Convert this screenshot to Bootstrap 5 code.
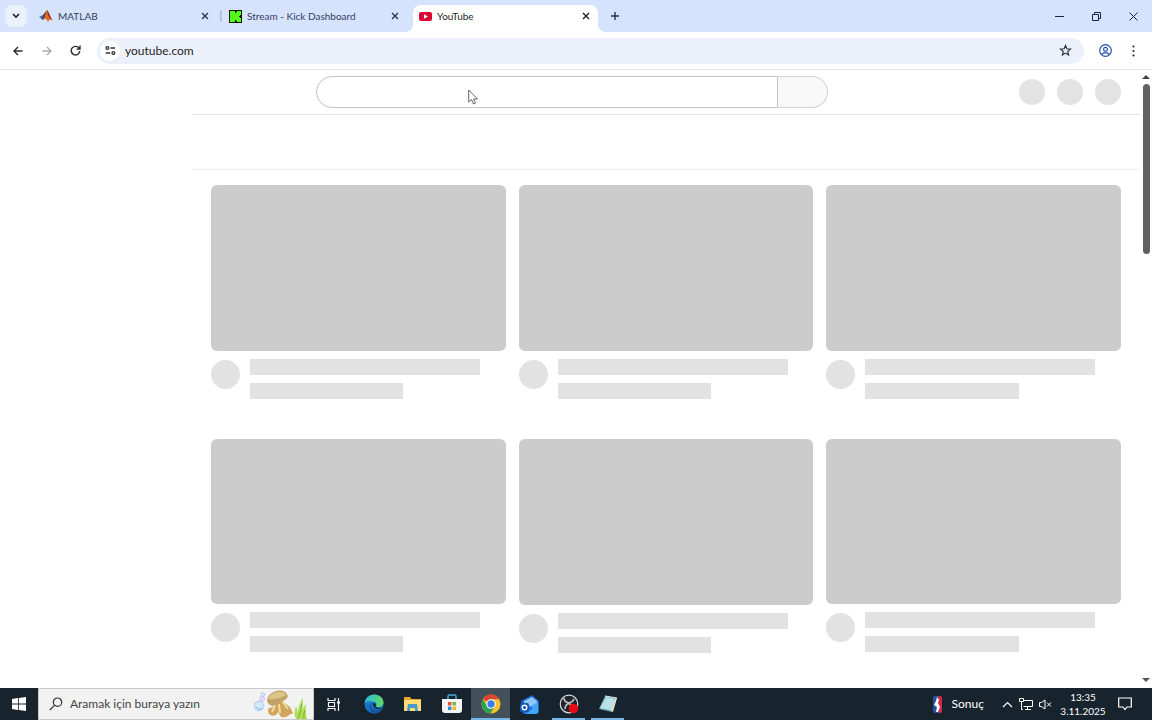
<!DOCTYPE html>
<html lang="tr">
<head>
<meta charset="utf-8">
<meta name="viewport" content="width=device-width, initial-scale=1">
<title>YouTube</title>
<link href="https://cdn.jsdelivr.net/npm/bootstrap@5.3.0/dist/css/bootstrap.min.css" rel="stylesheet">
<style>
body{font-family:Lato,"Open Sans",sans-serif;font-size:10px;line-height:16px;color:#1f1f1f;background:#fff}
button,input{font:inherit;color:inherit}
button{border:0;background:none;padding:0;display:flex;align-items:center;justify-content:center;flex-shrink:0}
svg{display:block;flex-shrink:0}
/* tab strip */
.tabstrip{height:32px;background:#d5e3fd}
.tab-menu{width:22px;height:22px;border-radius:7px;background:#e9f1fe;margin:0 10px 0 5px}
.tab-item{width:185px;height:27px;padding:0 8px 0 7px;gap:5px;color:#33415f;position:relative}
.tab-item a{color:inherit;text-decoration:none}
.tab-first{width:180px;padding-left:2px}
.tab-divided{border-left:2px solid #b3c4e6;height:12px;margin-left:3px}
.tab-active{margin-left:6px;background:#fff;border-radius:8px 8px 0 0;color:#1f1f1f;padding:0 8px 5px 6px}
.tab-active::before,.tab-active::after{content:"";position:absolute;bottom:0;width:8px;height:8px}
.tab-active::before{left:-8px;background:radial-gradient(circle at 0 0,transparent 8px,#fff 8px)}
.tab-active::after{right:-8px;background:radial-gradient(circle at 100% 0,transparent 8px,#fff 8px)}
.win-btn{width:37px;height:32px}
/* address row */
.toolbar{height:38px;border-bottom:1px solid #e3e4e8;padding:0 8px 0 7px;background:#fff}
.nav-btn{width:21px;height:22px}
.profile-btn{width:26px;margin:0 5px 0 8px}
.omnibox{height:26px;border-radius:13px;background:#ecf0fa;padding:0 12px 0 3px;margin-left:3px;gap:5px}
.site-info{width:20px;height:20px;border-radius:50%;background:#fff}
.omnibox input{border:0;background:none;outline:0;font-size:12px;padding:0}
/* page */
.viewport-row{min-height:0}
.page-main{margin-left:192px}
.masthead{height:45px;border-bottom:1px solid #e4e4e4;padding:0 19px 0 124px}
.search-form{width:512px;height:32px}
.search-form input{border:1px solid #c4c4c4;border-radius:16px 0 0 16px;padding:0 14px;outline:0}
.search-form button{width:50px;border:1px solid #d3d3d3;border-left:0;border-radius:0 16px 16px 0;background:#f8f8f8}
.dots{gap:12px}
.dot{width:26px;height:26px;border-radius:50%;background:#e3e3e3}
.chips{height:55px;border-bottom:1px solid #efefef}
.video-grid{display:grid;grid-template-columns:repeat(3,1fr);column-gap:13px;row-gap:40px;padding:15px 19px 0}
.thumb{aspect-ratio:16/9;border-radius:6px;background:#ccc}
.avatar{width:29px;height:29px;border-radius:50%;background:#e2e2e2;margin-top:1px}
.line{height:16px;width:90%;background:#e2e2e2}
.line-short{width:60%}
.meta{padding-top:8px;gap:10px}
.scroll-track{width:12px;padding:5px 0}
.scroll-thumb{width:7px;height:170px;border-radius:4px;background:#616161;margin-top:4px}
.cursor{position:absolute;left:468px;top:89px;pointer-events:none}
/* taskbar */
.taskbar{height:32px;background:#17232d;color:#fff}
.start{width:38px;height:32px}
.task-search{width:276px;height:32px;background:#f2f2f2;border:1px solid #c9c9c9;color:#333;padding:0 5px 0 10px;gap:7px}
.task-search input{border:0;background:none;outline:0;font-size:12px;padding:0;min-width:0}
.task-search input::placeholder{color:#444;opacity:1}
.task-btn{width:39px;height:32px;position:relative}
.task-view{width:40px}
.task-current{background:#44505a}
.task-open::after,.task-current::after{content:"";position:absolute;bottom:0;left:3px;right:3px;height:2px;background:#76b5e8}
.task-current::after{left:0;right:0}
.tray-news{font-size:12px;gap:10px;margin-right:18px}
.tray-icons{gap:6px;margin-right:7px}
.clock{width:48px;line-height:14px;text-align:center}
.notice{width:36px;height:32px}
.peek{width:9px;height:32px}
</style>
</head>
<body>
<div class="d-flex flex-column vh-100 overflow-hidden position-relative">
  <header class="tabstrip d-flex align-items-center flex-shrink-0">
    <button class="tab-menu" aria-label="Sekme ara"><svg width="8" height="6" viewBox="0 0 8 6" fill="none" stroke="#1b1e28" stroke-width="1.6"><path d="M1 1l3 3 3-3"/></svg></button>
    <div class="tab-item tab-first d-flex align-items-center">
      <svg width="14" height="12" viewBox="0 0 14 12"><path d="M0 7l4-2 2 2-2 3z" fill="#317fb1"/><path d="M4 5l4-5-2 7-2 3-1-1z" fill="#6b3a48"/><path d="M8 0c2 2 3 7 6 11-2-2-3-2-5 1C8 9 6 8 5 9c2-3 2-7 3-9z" fill="#e16c22"/><path d="M8 0c2 2 3 7 6 11-3-3-5-3-6-11z" fill="#982b1c"/></svg>
      <a href="#" class="flex-grow-1 text-truncate">MATLAB</a>
      <button aria-label="Kapat"><svg width="8" height="8" viewBox="0 0 8 8" stroke="#27324a" stroke-width="1.3"><path d="M1 1l6 6M7 1L1 7"/></svg></button>
    </div>
    <div class="tab-divided"></div>
    <div class="tab-item d-flex align-items-center">
      <svg width="13" height="13" viewBox="0 0 13 13"><path fill="#0b160b" d="M0 0h13v13H0z"/><path fill="#53fc18" d="M1 1h5v2h1V2h1V1h4v4h-1v1h-1v1h1v1h1v4H8v-1H7v-1H6v2H1z"/></svg>
      <a href="#" class="flex-grow-1 text-truncate">Stream - Kick Dashboard</a>
      <button aria-label="Kapat"><svg width="8" height="8" viewBox="0 0 8 8" stroke="#27324a" stroke-width="1.3"><path d="M1 1l6 6M7 1L1 7"/></svg></button>
    </div>
    <div class="tab-item tab-active d-flex align-items-center align-self-end">
      <svg width="13" height="9" viewBox="0 0 13 9"><rect width="13" height="9" rx="2" fill="#dc0834"/><path fill="#fff" d="M5 2.3v4.4L9 4.5z"/></svg>
      <a href="#" class="flex-grow-1 text-truncate">YouTube</a>
      <button aria-label="Kapat"><svg width="8" height="8" viewBox="0 0 8 8" stroke="#1f1f1f" stroke-width="1.4"><path d="M1 1l6 6M7 1L1 7"/></svg></button>
    </div>
    <button class="ms-2 px-1" aria-label="Yeni sekme"><svg width="10" height="10" viewBox="0 0 10 10" stroke="#26304a" stroke-width="1.4"><path d="M5 1v8M1 5h8"/></svg></button>
    <div class="ms-auto d-flex">
      <button class="win-btn" aria-label="Küçült"><svg width="9" height="9" viewBox="0 0 9 9" stroke="#1e2740"><path d="M0 4.5h9"/></svg></button>
      <button class="win-btn" aria-label="Geri yükle"><svg width="9" height="9" viewBox="0 0 9 9" fill="none" stroke="#1e2740"><path d="M.5 2.5h6v6h-6zM2.500 2V.5h6v6H7"/></svg></button>
      <button class="win-btn" aria-label="Kapat"><svg width="9" height="9" viewBox="0 0 9 9" stroke="#1e2740"><path d="M.5.5l8 8M8.500.5l-8 8"/></svg></button>
    </div>
  </header>

  <nav class="toolbar d-flex align-items-center flex-shrink-0" aria-label="Adres">
    <button class="nav-btn me-2" aria-label="Geri"><svg width="10" height="10" viewBox="0 0 10 10" fill="none" stroke="#2b2b2b" stroke-width="1.4"><path d="M9.5 5H1M5 1L1 5l4 4"/></svg></button>
    <button class="nav-btn me-2" aria-label="İleri"><svg width="10" height="10" viewBox="0 0 10 10" fill="none" stroke="#aaa" stroke-width="1.3"><path d="M.5 5H9M5 1l4 4-4 4"/></svg></button>
    <button class="nav-btn me-2" aria-label="Yenile"><svg width="11" height="11" viewBox="0 0 11 11" fill="none" stroke="#2b2b2b" stroke-width="1.4"><path d="M9.3 3.6A4.3 4.3 0 1 0 9.8 6M10 .6v3.5H6.5"/></svg></button>
    <div class="omnibox d-flex align-items-center flex-grow-1">
      <button class="site-info" aria-label="Site bilgileri"><svg width="11" height="9" viewBox="0 0 11 9" fill="none" stroke="#333" stroke-width="1.3"><circle cx="2.4" cy="2" r="1.4"/><path d="M5.5 2h4.5M.8 7h4.4"/><circle cx="8.4" cy="7" r="1.4"/></svg></button>
      <input class="flex-grow-1" type="text" value="youtube.com" aria-label="Adres çubuğu">
      <button aria-label="Yer işareti"><svg width="13" height="13" viewBox="0 0 13 13" fill="none" stroke="#303440" stroke-width="1.2"><path d="M6.5 1.500l1.400 3.300 3.600.3-2.700 2.400.8 3.500-3.100-1.900L3.400 11l.8-3.500-2.700-2.400 3.600-.3z"/></svg></button>
    </div>
    <button class="nav-btn profile-btn" aria-label="Profil"><svg width="13" height="13" viewBox="0 0 13 13" fill="none" stroke="#2450a8" stroke-width="1.2"><circle cx="6.5" cy="6.5" r="5.8"/><circle cx="6.5" cy="5.3" r="1.9"/><path d="M2.6 10.5c2-2.4 5.8-2.4 7.8 0"/></svg></button>
    <button class="nav-btn" aria-label="Menü"><svg width="3" height="12" viewBox="0 0 3 12" fill="#2b2b2b"><circle cx="1.5" cy="1.5" r="1.1"/><circle cx="1.5" cy="6" r="1.1"/><circle cx="1.5" cy="10.5" r="1.1"/></svg></button>
  </nav>

  <div class="viewport-row d-flex flex-grow-1 overflow-hidden">
    <main class="page-main flex-grow-1">
      <div class="masthead d-flex align-items-center">
        <form class="search-form d-flex"><input class="flex-grow-1" type="text" aria-label="Ara"><button type="button" aria-label="Ara"></button></form>
        <div class="dots d-flex ms-auto"><div class="dot"></div><div class="dot"></div><div class="dot"></div></div>
      </div>
      <div class="chips"></div>
      <div class="video-grid">
        <article><div class="thumb"></div><div class="d-flex meta"><div class="avatar"></div><div class="flex-grow-1"><div class="line mb-2"></div><div class="line line-short"></div></div></div></article>
        <article><div class="thumb"></div><div class="d-flex meta"><div class="avatar"></div><div class="flex-grow-1"><div class="line mb-2"></div><div class="line line-short"></div></div></div></article>
        <article><div class="thumb"></div><div class="d-flex meta"><div class="avatar"></div><div class="flex-grow-1"><div class="line mb-2"></div><div class="line line-short"></div></div></div></article>
        <article><div class="thumb"></div><div class="d-flex meta"><div class="avatar"></div><div class="flex-grow-1"><div class="line mb-2"></div><div class="line line-short"></div></div></div></article>
        <article><div class="thumb"></div><div class="d-flex meta"><div class="avatar"></div><div class="flex-grow-1"><div class="line mb-2"></div><div class="line line-short"></div></div></div></article>
        <article><div class="thumb"></div><div class="d-flex meta"><div class="avatar"></div><div class="flex-grow-1"><div class="line mb-2"></div><div class="line line-short"></div></div></div></article>
      </div>
    </main>
    <div class="scroll-track d-flex flex-column align-items-center flex-shrink-0">
      <svg width="8" height="5" viewBox="0 0 8 5"><path d="M4 0l4 4H0z" fill="#444"/></svg>
      <div class="scroll-thumb"></div>
      <svg class="mt-auto" width="8" height="5" viewBox="0 0 8 5"><path d="M0 0h8L4 4z" fill="#555"/></svg>
    </div>
  </div>

  <footer class="taskbar d-flex align-items-center flex-shrink-0">
    <button class="start" aria-label="Başlat"><svg width="14" height="14" viewBox="0 0 14 14" fill="#fff"><path d="M0 2l6-.9v5.500H0zM6.800 1L14 0v6.600H6.800zM0 7.400h6v5.500L0 12zM6.800 7.400H14V14l-7.200-1z"/></svg></button>
    <label class="task-search d-flex align-items-center">
      <svg width="14" height="14" viewBox="0 0 14 14" fill="none" stroke="#333" stroke-width="1.200"><circle cx="8.500" cy="5.200" r="4.200"/><path d="M5.500 8.300L.8 13"/></svg>
      <input class="flex-grow-1" type="text" placeholder="Aramak için buraya yazın" aria-label="Aramak için buraya yazın">
      <svg class="align-self-end" width="54" height="30" viewBox="0 0 54 30"><circle cx="8" cy="10" r="2.500" fill="#e6ddfa" stroke="#b9b5e6" stroke-width=".7"/><circle cx="9" cy="5.500" r="1.800" fill="#dce7fc" stroke="#b9b5e6" stroke-width=".7"/><circle cx="5" cy="17" r="4.800" fill="#d2e9fb" stroke="#a5bfe3" stroke-width=".8"/><path d="M2 18q3 4 6 1" stroke="#7bb4e0" fill="none"/><path d="M22 15q-4 4-7 4-2 2 0 6 3 3 7 1l2-3 3 5q6 1 8-2l4-2-3-6-8-6z" fill="#d0a55c"/><path d="M13 12q0-7 9-10 9-2 12 5-1 4-8 6l-4 4q-7 1-9-5z" fill="#c1a365"/><path d="M14 10q2-5 9-7 7-1 9 3-8 5-18 4z" fill="#dbc589"/><path d="M21 16l-3 7M25 15l1 9M29 13l5 7" stroke="#f0dca3" stroke-width="2"/><path d="M42 30q-3-6 0-13 2 5 2 8 0-9 5-16 0 9-1 14 1-5 4-8-1 9 1 15z" fill="#b0df55"/><path d="M44 30q3-8 4-15m2 15q-1-5 1-9" stroke="#72b936" fill="none"/></svg>
    </label>
    <button class="task-btn task-view" aria-label="Görev görünümü"><svg width="14" height="13" viewBox="0 0 14 13" fill="none" stroke="#f4f6f8" stroke-width="1.200"><path d="M1 0v2.500h7V0M1.500 4.500h6v4h-6zM1 13v-2.500h7V13M11.500 0v13"/><path d="M10 4.500h3" stroke-width="2"/></svg></button>
    <button class="task-btn" aria-label="Edge"><svg width="20" height="20" viewBox="0 0 20 20"><defs><linearGradient id="e1"><stop stop-color="#26b9dc"/><stop offset="1" stop-color="#62dc62"/></linearGradient><linearGradient id="e2" x2="0" y2="1"><stop stop-color="#2086cd"/><stop offset="1" stop-color="#1368bd"/></linearGradient></defs><circle cx="10" cy="10" r="9.500" fill="url(#e2)"/><path d="M.5 10A9.500 9.500 0 0 1 10 .5c6 0 9.500 4 9.500 8 0 4-5 6-8 4 2-2 1-5-3-5C4 6.500 1 8 .5 10z" fill="url(#e1)"/><path d="M8 8.500c-2 2-1 7 4 7.500 3 0 5-1 6.500-2-2 4-5 5.500-8.500 5.500C6 18 4 11 8 8.500z" fill="#1655a4"/><path d="M9 9q4 0 2.500 3.500 3 2.500 7 .8-1 1.700-4 1.700-6-.5-5.500-6z" fill="#17232d"/></svg></button>
    <button class="task-btn" aria-label="Dosya Gezgini"><svg width="17" height="15" viewBox="0 0 17 15"><path d="M0 0h6l1.500 2H17v4H0z" fill="#e8a72d"/><path d="M0 3h17v11H0z" fill="#ffdc76"/><path d="M4 7h9l1 7h-3v-3H6v3H3z" fill="#4999cf"/></svg></button>
    <button class="task-btn" aria-label="Store"><svg width="20" height="20" viewBox="0 0 20 20"><path d="M6 6V2q0-1 1-1h6q1 0 1 1v4" fill="none" stroke="#49a6d9" stroke-width="1.500"/><path d="M0 5h20v11q0 3-3 3H3q-3 0-3-3z" fill="#f1f3f5"/><path fill="#e45637" d="M6 8h3.500v3.500H6z"/><path fill="#80b73c" d="M10.500 8H14v3.500h-3.500z"/><path fill="#318ed0" d="M6 12.500h3.500V16H6z"/><path fill="#efb82e" d="M10.500 12.500H14V16h-3.500z"/></svg></button>
    <button class="task-btn task-current" aria-label="Chrome"><svg width="20" height="20" viewBox="0 0 20 20"><circle cx="10" cy="10" r="9.500" fill="#f6c52b"/><path d="M10 10L1.800 5.200A9.500 9.500 0 0 1 18.200 5.200H10z" fill="#df4433"/><path d="M1.800 5.200A9.500 9.500 0 0 0 9.500 19.500L14 12.300 10 14 6 12z" fill="#2ca253"/><circle cx="10" cy="10" r="4.800" fill="#fff"/><circle cx="10" cy="10" r="3.700" fill="#3c7de5"/></svg></button>
    <button class="task-btn" aria-label="Outlook"><svg width="19" height="19" viewBox="0 0 19 19"><path d="M1 6L12 0l7 6v10q0 3-3 3H5q-3 0-3-3z" fill="#1763cc"/><path d="M4 6l8-4 5 4v5H4z" fill="#92c7fa"/><path d="M18 7v9q0 3-3 3H6l-2-4z" fill="#41a6f3"/><path d="M4 9l9 4-7 6-4-3z" fill="#276edd"/><rect y="8" width="9" height="9" rx="2" fill="#1157b7"/><circle cx="4.500" cy="12.500" r="2.300" fill="none" stroke="#fff" stroke-width="1.400"/></svg></button>
    <button class="task-btn task-open" aria-label="OBS"><svg width="20" height="20" viewBox="0 0 20 20"><circle cx="10" cy="10" r="8.800" fill="#20252b" stroke="#d8dadd" stroke-width="1.200"/><path d="M5 4q0 4 5 5 4-1 5-4M10 9q-4 2-4 6M10 9q2 3 5 3" fill="none" stroke="#b8bdc1" stroke-width="1.700"/><circle cx="14.500" cy="14.500" r="4.800" fill="#e60b15"/></svg></button>
    <button class="task-btn task-open" aria-label="Not Defteri"><svg width="18" height="18" viewBox="0 0 18 18"><path d="M6 1l12 2-5 14-13-3z" fill="#6caebb"/><path d="M7 2l9 2-5 11-10-2z" fill="#b9e2e6"/><path d="M16 4l2-1-4 14-3-2z" fill="#dce1d1"/><path d="M6 1l12 2" stroke="#e4edf0"/></svg></button>
    <div class="tray-news ms-auto d-flex align-items-center">
      <svg width="9" height="17" viewBox="0 0 9 17"><rect width="9" height="17" rx="2" fill="#2750a0"/><path d="M5 0h2q2 0 2 2v13q0 2-2 2H6z" fill="#d52946"/><path d="M4 1l2 3-1 3 2 4-2 5H3l1-5-3-2 2-4z" fill="#fff"/></svg>
      <span>Sonuç</span>
    </div>
    <div class="tray-icons d-flex align-items-center">
      <button aria-label="Gizli simgeler"><svg width="11" height="7" viewBox="0 0 11 7" fill="none" stroke="#fff" stroke-width="1.200"><path d="M1 6l4.500-4.500L10 6"/></svg></button>
      <button aria-label="Ağ"><svg width="14" height="12" viewBox="0 0 14 12" fill="none" stroke="#fff"><path d="M4 2.500h9.500v6H4.500M8.500 9v2M6 11.500h6M.5.500h4v3h-4zM2.500 4v7.500H4"/></svg></button>
      <button aria-label="Ses"><svg width="13" height="11" viewBox="0 0 13 11" fill="none" stroke="#fff"><path d="M.5 3.500h2L6 1v9L2.500 7.500h-2zM8 3.500l4 4M12 3.500l-4 4"/></svg></button>
    </div>
    <time class="clock">13:35<br>3.11.2025</time>
    <button class="notice" aria-label="Bildirimler"><svg width="14" height="14" viewBox="0 0 14 14" fill="none" stroke="#fff" stroke-width="1.200"><path d="M.7 1h12.600v9H9l-2 2.500L5 10H.7z"/></svg></button>
    <div class="peek"></div>
  </footer>

  <svg class="cursor" width="11" height="16" viewBox="0 0 11 16"><path d="M.7 1v12l2.800-2.500L5.500 15l2-1-2-4H9.500z" fill="#fff" stroke="#555" stroke-width=".9"/></svg>
</div>
<script src="https://cdn.jsdelivr.net/npm/bootstrap@5.3.0/dist/js/bootstrap.bundle.min.js"></script>
</body>
</html>
